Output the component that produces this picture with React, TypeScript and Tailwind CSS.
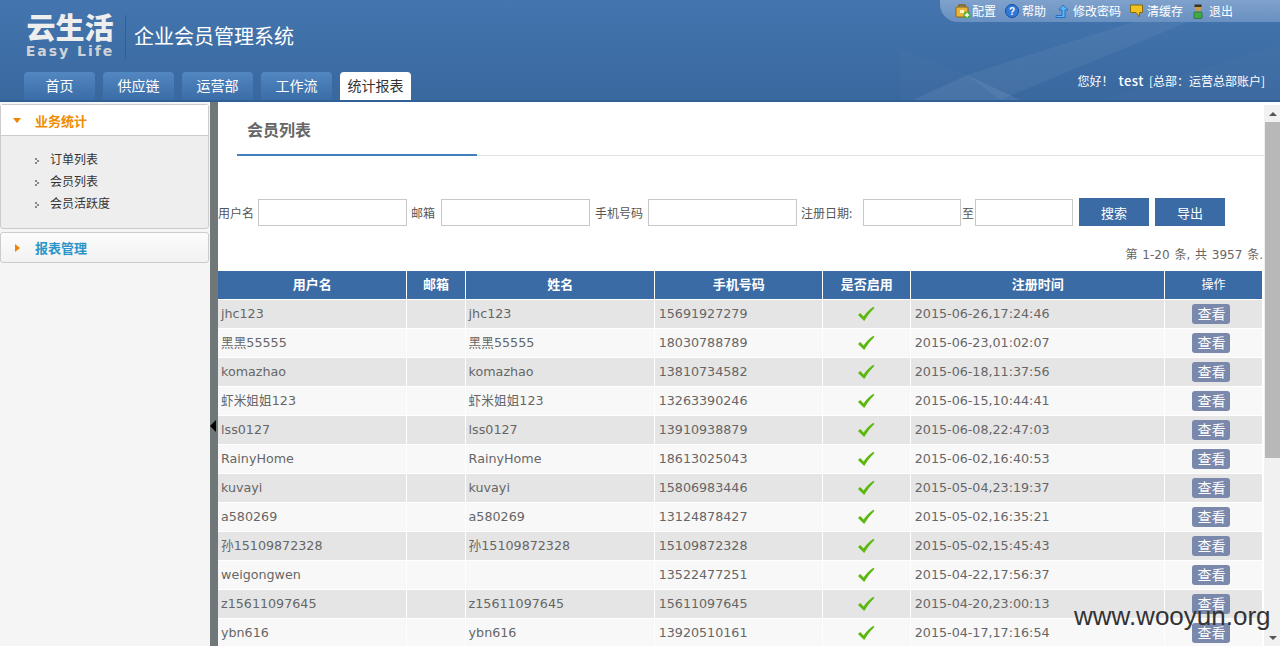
import React from 'react';

const CJK = '"Noto Sans CJK SC", sans-serif';

const members = [
  ['jhc123', 'jhc123', '15691927279', '2015-06-26,17:24:46'],
  ['黑黑55555', '黑黑55555', '18030788789', '2015-06-23,01:02:07'],
  ['komazhao', 'komazhao', '13810734582', '2015-06-18,11:37:56'],
  ['虾米姐姐123', '虾米姐姐123', '13263390246', '2015-06-15,10:44:41'],
  ['lss0127', 'lss0127', '13910938879', '2015-06-08,22:47:03'],
  ['RainyHome', 'RainyHome', '18613025043', '2015-06-02,16:40:53'],
  ['kuvayi', 'kuvayi', '15806983446', '2015-05-04,23:19:37'],
  ['a580269', 'a580269', '13124878427', '2015-05-02,16:35:21'],
  ['孙15109872328', '孙15109872328', '15109872328', '2015-05-02,15:45:43'],
  ['weigongwen', '', '13522477251', '2015-04-22,17:56:37'],
  ['z15611097645', 'z15611097645', '15611097645', '2015-04-20,23:00:13'],
  ['ybn616', 'ybn616', '13920510161', '2015-04-17,17:16:54'],
];

const tabs = ['首页', '供应链', '运营部', '工作流'];

const ConfigIcon = () => (
  <svg width="16" height="16" viewBox="0 0 16 16">
    <rect x="1" y="4" width="12" height="10" rx="1" fill="#e8b63a" stroke="#8a6414" />
    <path d="M4 4V2h6v2" fill="none" stroke="#8a6414" strokeWidth="1.4" />
    <rect x="5" y="7" width="4" height="3" fill="#fff3c4" />
    <circle cx="12" cy="12" r="3.500" fill="#4caf2c" />
    <path d="M12 9.800v4.400M9.800 12h4.400" stroke="#fff" strokeWidth="1.4" />
  </svg>
);

const HelpIcon = () => (
  <svg width="14" height="14" viewBox="0 0 14 14">
    <circle cx="7" cy="7" r="6.500" fill="#2f78dc" stroke="#164f9e" />
    <text x="7" y="10.600" textAnchor="middle" fontSize="10" fontWeight="700" fill="#fff" fontFamily="Liberation Sans">?</text>
  </svg>
);

const ArrowIcon = () => (
  <svg width="15" height="15" viewBox="0 0 15 15">
    <path d="M8 1l5 5h-3v7.500H1v-2h6V6H4z" fill="#5fb4f4" stroke="#1a62b8" strokeWidth="0.8" />
  </svg>
);

const BubbleIcon = () => (
  <svg width="13" height="14" viewBox="0 0 13 14">
    <path d="M.5 1h12v7.500H9.500V13L6 8.500H.5z" fill="#f2c21f" stroke="#8a6a10" />
  </svg>
);

const ExitIcon = () => (
  <svg width="12" height="15" viewBox="0 0 12 15">
    <circle cx="6" cy="4" r="3.200" fill="#c99a4a" />
    <rect x="2.500" y="0.500" width="7" height="2.500" fill="#3a3320" />
    <rect x="2" y="8" width="8" height="6.500" rx="1" fill="#44a844" stroke="#1f6a25" strokeWidth="0.7" />
  </svg>
);

const topLinks = [
  { icon: <ConfigIcon />, label: '配置', gap: 'gap-[1px]' },
  { icon: <HelpIcon />, label: '帮助', gap: 'gap-[3px]' },
  { icon: <ArrowIcon />, label: '修改密码', gap: 'gap-[3px]' },
  { icon: <BubbleIcon />, label: '清缓存', gap: 'gap-[4px]' },
  { icon: <ExitIcon />, label: '退出', gap: 'gap-[5px]' },
];

const Check = () => (
  <svg width="18" height="16" viewBox="0 0 18 16" className="mx-auto block">
    <path d="M1 9l2.200-2 3.400 3.400C9.500 6.400 12.600 3.200 16.400.800l1 1.100C13.400 5.600 10.200 9.800 7.200 15z" fill="#5cb811" />
  </svg>
);

const Header = () => (
  <header className="relative h-[102px] shrink-0 overflow-hidden border-b-2 border-[#2f6096] bg-gradient-to-b from-[#4475ae] to-[#39689f]">
    <svg className="absolute left-[900px] top-0 h-[100px] w-[380px]" viewBox="0 0 380 100" fill="none">
      <path d="M67 75L233 22h55L100 100z" fill="#fff" fillOpacity="0.05" />
      <path d="M13 100l54-25 53 25z" fill="#fff" fillOpacity="0.08" />
      <path d="M0 50l67 25-54 25H0z" fill="#fff" fillOpacity="0.02" />
      <path d="M200 100L380 45v55z" fill="#fff" fillOpacity="0.02" />
    </svg>
    <div className="absolute right-0 top-0 flex h-[22px] w-[340px] items-center gap-[9px] rounded-bl-[18px] bg-gradient-to-b from-[#7fa2cc] to-[#6890c1] pl-[15px]">
      {topLinks.map((l) => (
        <span key={l.label} className={`flex items-center text-[12px] text-white ${l.gap}`}>
          {l.icon}
          {l.label}
        </span>
      ))}
    </div>
    <div className="relative flex h-[71px] items-start pl-[26px] pt-[11px]">
      <div className="flex w-[88px] flex-col items-center">
        <span className="whitespace-nowrap text-[29px] font-black leading-[31px] text-[#eeeeee]">云生活</span>
        <span className="mt-[1px] whitespace-nowrap text-[14px] font-bold leading-[17px] tracking-[2px] text-[#cfd3d8]" style={{ fontFamily: '"DejaVu Sans", sans-serif' }}>
          Easy Life
        </span>
      </div>
      <div className="ml-[11px] mt-[4px] h-[44px] w-px bg-[#2f5f96]" />
      <span className="ml-[8px] mt-[11px] text-[20px] leading-[28px] text-white">企业会员管理系统</span>
    </div>
    <div className="relative flex items-end justify-between pl-[24px] pr-[15px]">
      <nav className="flex gap-[8px]">
        {tabs.map((t) => (
          <span key={t} className="flex h-[29px] w-[71px] items-center justify-center rounded-t-[4px] bg-gradient-to-b from-[#5287c2] to-[#3a6ca6] pb-[1px] text-[14px] text-white">
            {t}
          </span>
        ))}
        <span className="flex h-[29px] w-[71px] items-center justify-center rounded-t-[4px] bg-white pb-[1px] text-[14px] text-[#333333]">统计报表</span>
      </nav>
      <span className="mb-[10px] text-[12px] text-white">
        您好！
        <span className="ml-[5px] mr-[5px] text-[13px] font-medium tracking-[0.5px]">test</span>
        [总部：运营总部账户]
      </span>
    </div>
  </header>
);

const Bullet = () => (
  <svg width="5" height="7" viewBox="0 0 5 7" className="absolute left-0 top-[10px]">
    <path d="M0 0h2v2H0zM2 2h2v2H2zM0 4h2v2H0z" fill="#888888" />
  </svg>
);

const Sidebar = () => (
  <aside className="flex w-[210px] shrink-0 flex-col bg-[#f5f5f5] pr-[1px] pt-[2px]">
    <div className="rounded-[3px] border border-[#cccccc] bg-[#eeeeee]">
      <div className="flex h-[31px] items-center border-b border-[#cccccc] bg-white pl-[12px]">
        <span className="h-0 w-0 border-x-[4px] border-t-[5px] border-x-transparent border-t-[#f08300]" />
        <span className="ml-[14px] pt-[1px] text-[13px] font-bold text-[#f08c00]">业务统计</span>
      </div>
      <ul className="h-[92px] pl-[34px] pt-[12px] text-[12px] text-[#333333]">
        {['订单列表', '会员列表', '会员活跃度'].map((item) => (
          <li key={item} className="relative h-[22px] pl-[15px] leading-[22px]">
            <Bullet />
            {item}
          </li>
        ))}
      </ul>
    </div>
    <div className="mt-[3px] flex h-[31px] items-center rounded-[3px] border border-[#cccccc] bg-gradient-to-b from-[#fcfcfc] to-[#f2f2f2] pl-[14px]">
      <span className="h-0 w-0 border-y-[4px] border-l-[5px] border-y-transparent border-l-[#f08300]" />
      <span className="ml-[15px] pt-[1px] text-[13px] font-bold text-[#2a95c8]">报表管理</span>
    </div>
  </aside>
);

const Splitter = () => (
  <div className="flex w-[8px] shrink-0 items-center bg-[#6f7779]">
    <span className="mt-[104px] h-0 w-0 border-y-[6px] border-r-[6px] border-y-transparent border-r-black" />
  </div>
);

const FilterBar = () => (
  <div className="mt-[42px] flex h-[28px] items-center text-[12px] text-[#555555]">
    <span className="mr-[4px] whitespace-nowrap pt-[2px]">用户名</span>
    <input className="h-[27px] w-[149px] border border-[#c8c8c8] bg-white" />
    <span className="ml-[4px] mr-[6px] pt-[2px]">邮箱</span>
    <input className="h-[27px] w-[149px] border border-[#c8c8c8] bg-white" />
    <span className="ml-[5px] mr-[5px] pt-[2px]">手机号码</span>
    <input className="h-[27px] w-[149px] border border-[#c8c8c8] bg-white" />
    <span className="ml-[4px] mr-[7px] w-[55px] whitespace-nowrap pt-[2px]">注册日期:</span>
    <input className="h-[27px] w-[98px] border border-[#c8c8c8] bg-white" />
    <span className="mx-[1px] pt-[2px]">至</span>
    <input className="h-[27px] w-[98px] border border-[#c8c8c8] bg-white" />
    <button className="ml-[6px] h-[28px] w-[70px] bg-[#3b6ba5] pt-[1px] text-[13px] text-white">搜索</button>
    <button className="ml-[6px] h-[28px] w-[70px] bg-[#3b6ba5] pt-[1px] text-[13px] text-white">导出</button>
  </div>
);

const MemberTable = () => (
  <table className="w-[1045px] table-fixed border-collapse text-[12.7px] text-[#666666]" style={{ fontFamily: `"DejaVu Sans", ${CJK}` }}>
    <colgroup>
      <col className="w-[188px]" />
      <col className="w-[59px]" />
      <col className="w-[189px]" />
      <col className="w-[168px]" />
      <col className="w-[88px]" />
      <col className="w-[254px]" />
      <col className="w-[98px]" />
    </colgroup>
    <thead>
      <tr className="h-[28px] bg-[#3b6ba5] text-[13px] text-white">
        {['用户名', '邮箱', '姓名', '手机号码', '是否启用', '注册时间'].map((h) => (
          <th key={h} className="border-x border-b border-white pl-[1px] first:border-l-0">{h}</th>
        ))}
        <th className="border-x border-b border-white pt-[1px] text-[12px] font-normal">操作</th>
      </tr>
    </thead>
    <tbody>
      {members.map((m, i) => (
        <tr key={m[0]} className={`h-[29px] ${i % 2 === 0 ? 'bg-[#e5e5e5]' : 'bg-[#f8f8f8]'}`}>
          <td className="border-x border-b border-white pl-[3px] pt-[1px] first:border-l-0">{m[0]}</td>
          <td className="border-x border-b border-white" />
          <td className="border-x border-b border-white pl-[3px] pt-[1px]">{m[1]}</td>
          <td className="border-x border-b border-white pl-[4px] pt-[1px]">{m[2]}</td>
          <td className="border-x border-b border-white"><Check /></td>
          <td className="border-x border-b border-white pl-[4px] pt-[1px]">{m[3]}</td>
          <td className="border-x border-b border-white pt-[1px] text-center">
            <span className="mr-[4px] inline-block h-[20px] w-[38px] rounded-[3px] bg-[#7a88ab] text-[14px] leading-[20px] text-white">查看</span>
          </td>
        </tr>
      ))}
    </tbody>
  </table>
);

const Scrollbar = () => (
  <div className="mt-[3px] flex w-[16px] shrink-0 flex-col bg-[#f1f1f1] pl-[1px]">
    <div className="flex h-[17px] items-center justify-center">
      <span className="h-0 w-0 border-x-[4px] border-b-[4px] border-x-transparent border-b-[#555555]" />
    </div>
    <div className="h-[336px] bg-[#b8b8b8]" />
    <div className="mt-auto flex h-[17px] items-center justify-center">
      <span className="h-0 w-0 border-x-[4px] border-t-[4px] border-x-transparent border-t-[#555555]" />
    </div>
  </div>
);

export default function App() {
  return (
    <div className="relative flex h-[646px] w-[1280px] flex-col overflow-hidden bg-white" style={{ fontFamily: `"Noto Sans CJK SC", "DejaVu Sans", sans-serif` }}>
      <Header />
      <div className="flex min-h-0 flex-1">
        <Sidebar />
        <Splitter />
        <main className="min-w-0 flex-1 overflow-hidden">
          <div className="ml-[19px] flex h-[54px] items-end border-b border-[#e2e2e2]">
            <div className="-mb-px flex h-[55px] w-[240px] items-center border-b-2 border-[#427fbd] pl-[10px] pt-[2px] text-[16px] font-bold text-[#666666]">会员列表</div>
          </div>
          <FilterBar />
          <div className="mb-[7px] mt-[20px] w-[1045px] text-right text-[12px] leading-[18px] text-[#666666] [word-spacing:1px]" style={{ fontFamily: `"DejaVu Sans", ${CJK}` }}>第 1-20 条, 共 3957 条.</div>
          <MemberTable />
        </main>
        <Scrollbar />
      </div>
      <span className="absolute bottom-[14px] left-[1074px] text-[26px] leading-[32px] text-[#333333]" style={{ fontFamily: '"Liberation Sans", sans-serif' }}>www.wooyun.org</span>
    </div>
  );
}
